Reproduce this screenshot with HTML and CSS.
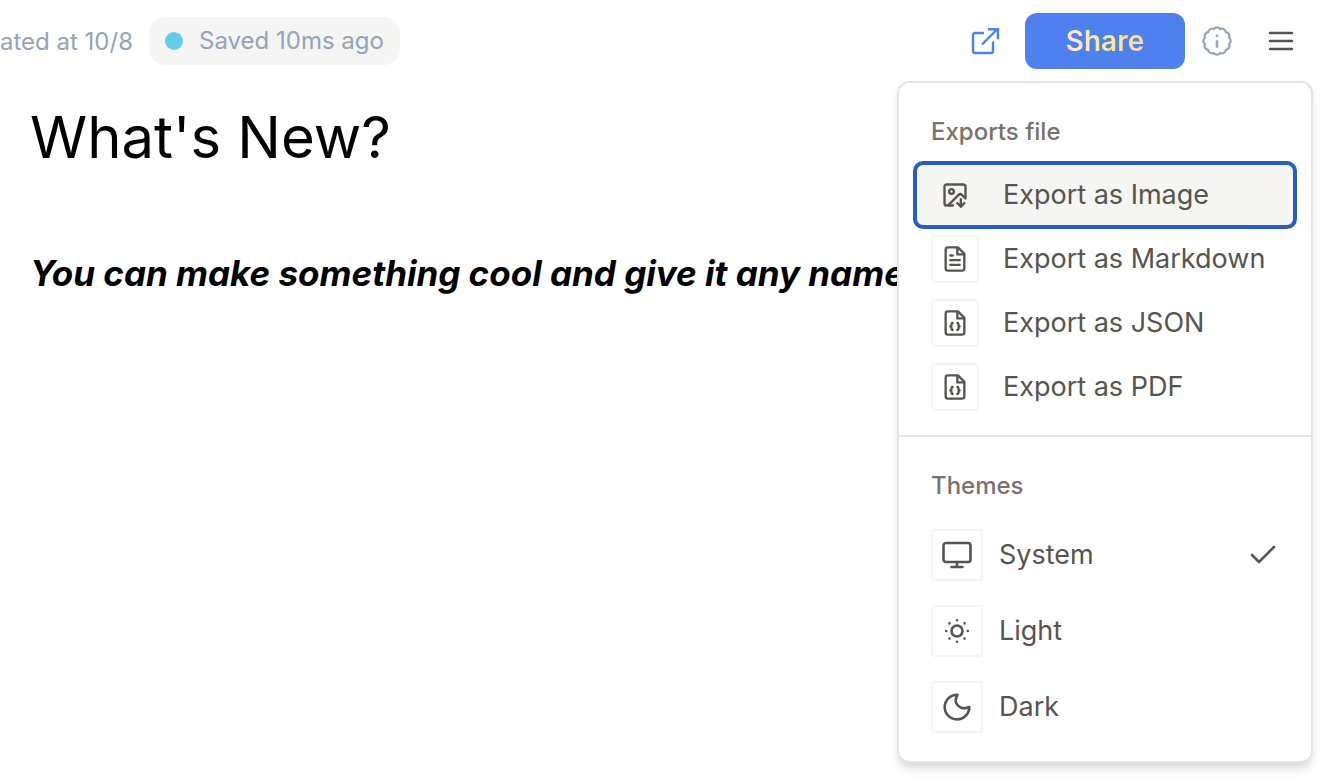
FILE: index.html
```html
<!DOCTYPE html>
<html lang="en">
<head>
<meta charset="utf-8">
<title>What's New?</title>
<link rel="stylesheet" href="styles.css">
</head>
<body>
<header class="topbar">
  <span class="created">ated at 10/8</span>
  <span class="saved"><i class="dot"></i>Saved 10ms ago</span>
  <div class="actions">
    <button class="icon-button open" aria-label="Open in new tab">
      <svg width="32" height="32" viewBox="0 0 32 32" fill="none" stroke="currentColor" stroke-width="2.4"><path d="M15 8H6a2 2 0 0 0-2 2V26a2 2 0 0 0 2 2H22a2 2 0 0 0 2-2V16.500M13 19.500 28 4.500M19 4.200H29V14.200"/></svg>
    </button>
    <button class="share"><span>Share</span></button>
    <button class="icon-button info" aria-label="Info">
      <svg width="32" height="32" viewBox="0 0 32 32" fill="none" stroke="currentColor" stroke-width="2.2" stroke-linecap="round" stroke-linejoin="round"><path d="M12.800 4A3.900 3.900 0 0 1 19.200 4A3.900 3.900 0 0 1 24.800 7.200A3.900 3.900 0 0 1 28 12.800A3.900 3.900 0 0 1 28 19.200A3.900 3.900 0 0 1 24.800 24.800A3.900 3.900 0 0 1 19.200 28A3.900 3.900 0 0 1 12.800 28A3.900 3.900 0 0 1 7.200 24.800A3.900 3.900 0 0 1 4 19.200A3.900 3.900 0 0 1 4 12.800A3.900 3.900 0 0 1 7.200 7.200A3.900 3.900 0 0 1 12.800 4Z"/><path stroke-width="2.6" d="M16 21.500v-5M16 10.800v.01"/></svg>
    </button>
    <button class="icon-button menu-toggle" aria-label="Menu" aria-expanded="true">
      <svg width="32" height="32" viewBox="0 0 32 32" fill="none" stroke="currentColor" stroke-width="2.400" stroke-linecap="round"><path d="M5 8H27M5 16H27M5 24H27"/></svg>
    </button>
    <div class="menu">
      <section class="group">
        <h2 class="label">Exports file</h2>
        <button class="item selected"><span class="tile"><svg width="28" height="28" viewBox="0 0 24 24"><path d="M10.300 21H5a2 2 0 0 1-2-2V5a2 2 0 0 1 2-2h14a2 2 0 0 1 2 2v10l-3.100-3.100a2 2 0 0 0-2.814.014L6 21"/><path d="m14 19 3 3 3-3M17 22v-6.500"/><circle cx="9" cy="9" r="2"/></svg></span>Export as Image</button>
        <button class="item"><span class="tile"><svg width="28" height="28" viewBox="0 0 24 24"><path d="M14.500 2H6a2 2 0 0 0-2 2v16a2 2 0 0 0 2 2h12a2 2 0 0 0 2-2V7.500L14.500 2zM14 2v6h6M16 13H8M16 17H8M10 9H8"/></svg></span>Export as Markdown</button>
        <button class="item"><span class="tile"><svg width="28" height="28" viewBox="0 0 24 24"><path d="M14.500 2H6a2 2 0 0 0-2 2v16a2 2 0 0 0 2 2h12a2 2 0 0 0 2-2V7.500L14.500 2zM14 2v6h6"/><path d="M10 12a1 1 0 0 0-1 1v1a1 1 0 0 1-1 1 1 1 0 0 1 1 1v1a1 1 0 0 0 1 1M14 18a1 1 0 0 0 1-1v-1a1 1 0 0 1 1-1 1 1 0 0 1-1-1v-1a1 1 0 0 0-1-1"/></svg></span>Export as JSON</button>
        <button class="item"><span class="tile"><svg width="28" height="28" viewBox="0 0 24 24"><path d="M14.500 2H6a2 2 0 0 0-2 2v16a2 2 0 0 0 2 2h12a2 2 0 0 0 2-2V7.500L14.500 2zM14 2v6h6"/><path d="M10 12a1 1 0 0 0-1 1v1a1 1 0 0 1-1 1 1 1 0 0 1 1 1v1a1 1 0 0 0 1 1M14 18a1 1 0 0 0 1-1v-1a1 1 0 0 1 1-1 1 1 0 0 1-1-1v-1a1 1 0 0 0-1-1"/></svg></span>Export as PDF</button>
      </section>
      <section class="group themes">
        <h2 class="label">Themes</h2>
        <button class="item"><span class="tile"><svg width="32" height="32" viewBox="0 0 32 32"><rect x="2.500" y="4" width="27" height="19" rx="2.500"/><path d="M16 23v5M10.500 28h11"/></svg></span>System<svg class="check" width="32" height="32" viewBox="0 0 32 32"><path d="m5 16 7 7L27 8"/></svg></button>
        <button class="item"><span class="tile"><svg width="32" height="32" viewBox="0 0 32 32"><circle cx="16" cy="16" r="5.500"/><path d="M16 5.200v.01M16 26.800v.01M5.200 16h.01M26.800 16h.01M8.400 8.400h.01M23.600 8.400h.01M8.400 23.600h.01M23.600 23.600h.01"/></svg></span>Light</button>
        <button class="item"><span class="tile"><svg width="32" height="32" viewBox="0 0 32 32"><path d="M16.500 3.800A12.300 12.300 0 1 0 28.300 16C20 20 11 13 16.500 3.800Z"/></svg></span>Dark</button>
      </section>
    </div>
  </div>
</header>
<main class="document">
  <h1>What's New?</h1>
  <p>You can make something cool and give it any name</p>
</main>
</body>
</html>
```

FILE: styles.css
```css
* { box-sizing: border-box; }
body { margin: 0; min-height: 100vh; background: #fff; color: #000; font-family: Inter, sans-serif; }
button { border: 0; padding: 0; background: none; color: inherit; font: inherit; cursor: pointer; }
svg { display: block; flex: none; }

.topbar { display: flex; align-items: center; height: 82px; padding-right: 28px; color: #94a3b8; font-size: 24px; line-height: 32px; white-space: nowrap; }
.created { padding-top: 2px; }
.saved { display: flex; align-items: center; height: 48px; margin-left: 16px; padding: 0 16px; border-radius: 16px; background: #f5f5f4; line-height: 50px; }
.dot { width: 18px; height: 18px; margin-right: 16px; border-radius: 50%; background: #60d0e8; }
.actions { position: relative; display: flex; align-items: center; margin-left: auto; }
.open { margin-right: 24px; color: #4e80ee; }
.share { width: 160px; height: 56px; border-radius: 12px; background: #4e80ee; font-size: 28px; font-weight: 600; }
.share span { background: linear-gradient(90deg, #ffe4e6, #fef08a 50%, #fed7aa); background-clip: text; -webkit-background-clip: text; color: transparent; }
.info { margin: 0 32px 0 16px; }
.menu-toggle { color: #57534e; }

.menu { position: absolute; top: 68px; right: -16px; width: 416px; border: 2px solid #e4e4e4; border-radius: 12px; background: #fff; color: #57534e; box-shadow: 0 8px 12px -2px rgba(0, 0, 0, .12), 0 4px 8px -4px rgba(0, 0, 0, .1); }
.group { display: flex; flex-direction: column; padding: 33px 16px 16px; }
.label { margin: 0 0 15px; padding: 0 16px; color: #78716c; font-size: 24px; font-weight: 500; line-height: 32px; }
.item { display: flex; align-items: center; gap: 24px; height: 64px; padding: 0 16px; border-radius: 8px; font-size: 27px; line-height: 36px; text-align: left; }
.tile { display: grid; place-items: center; flex: none; width: 48px; height: 48px; border: 2px solid #f5f5f4; border-radius: 4px; }
.item svg { fill: none; stroke: currentColor; stroke-width: 2; stroke-linecap: round; stroke-linejoin: round; }
.themes .item svg { stroke-width: 2.6; }
.selected { background: #f5f5f4; outline: 4px solid #265dc5; outline-offset: -2px; }
.themes { border-top: 2px solid #e4e4e4; }
.themes .item { height: 76px; gap: 16px; }
.themes .tile { width: 52px; height: 52px; }
.item .check { margin-left: auto; }

.document { padding: 0 30px; white-space: nowrap; }
h1 { margin: 0; padding-top: 17px; font-size: 58px; font-weight: 400; line-height: 76px; }
p { margin: 74px 0 0; font-size: 35px; font-weight: 700; font-style: italic; line-height: 48px; }
```
